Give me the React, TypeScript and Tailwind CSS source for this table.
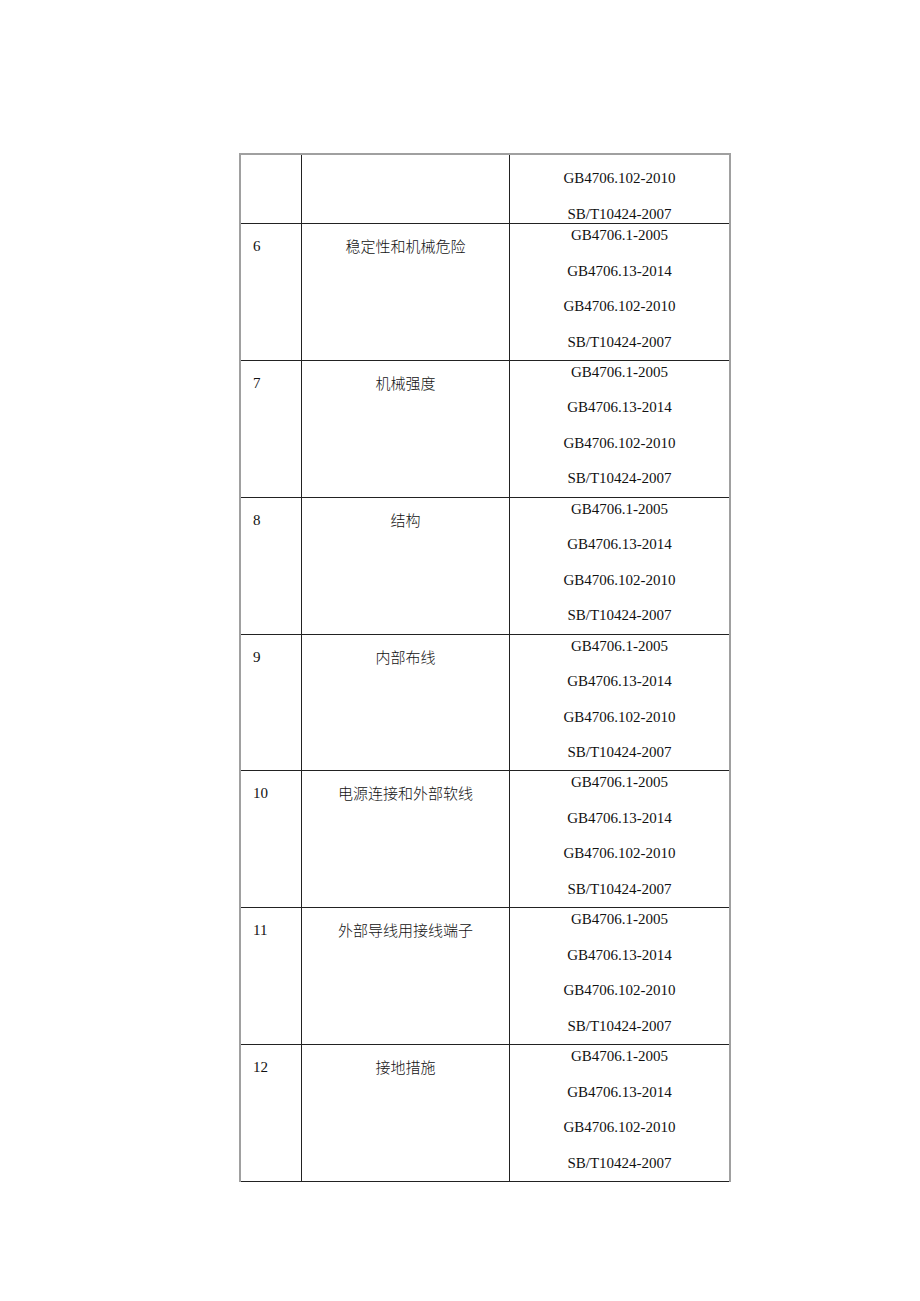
import React from 'react';

const standards = ['GB4706.1-2005', 'GB4706.13-2014', 'GB4706.102-2010', 'SB/T10424-2007'];

const rows = [
  { no: '6', item: '稳定性和机械危险' },
  { no: '7', item: '机械强度' },
  { no: '8', item: '结构' },
  { no: '9', item: '内部布线' },
  { no: '10', item: '电源连接和外部软线' },
  { no: '11', item: '外部导线用接线端子' },
  { no: '12', item: '接地措施' },
];

const serif = { fontFamily: '"Liberation Serif", "Noto Sans CJK SC", serif' };

function StdList({ items }: { items: string[] }) {
  return (
    <div className="flex flex-col gap-[13.5px]">
      {items.map((s) => (
        <div key={s} className="h-[22px] text-center text-[15px] leading-[22px] text-[#111]">
          {s}
        </div>
      ))}
    </div>
  );
}

export default function App() {
  return (
    <div className="min-h-[1301px] w-[920px] bg-white pl-[239px] pt-[153px]" style={serif}>
      <div className="w-[492px] border-x-2 border-t-2 border-[#a0a0a0]">
        {/* continued from previous page */}
        <div className="grid h-[69px] grid-cols-[61px_208px_1fr] border-b border-[#222]">
          <div className="border-r border-[#222]" />
          <div className="border-r border-[#222]" />
          <div className="pt-[12px]">
            <StdList items={standards.slice(2)} />
          </div>
        </div>

        {rows.map((r) => (
          <div key={r.no} className="grid h-[136.85px] grid-cols-[61px_208px_1fr] border-b border-[#222]">
            <div className="border-r border-[#222] pl-[12px] pt-[11px] text-[15px] leading-[22px] text-[#111]">{r.no}</div>
            <div
              className="border-r border-[#222] pt-[11px] text-center text-[15px] leading-[22px] text-[#111]"
              style={{ fontFamily: '"Noto Sans CJK SC", sans-serif', fontWeight: 300 }}
            >
              {r.item}
            </div>
            <div className="pt-0">
              <StdList items={standards} />
            </div>
          </div>
        ))}
      </div>
    </div>
  );
}
